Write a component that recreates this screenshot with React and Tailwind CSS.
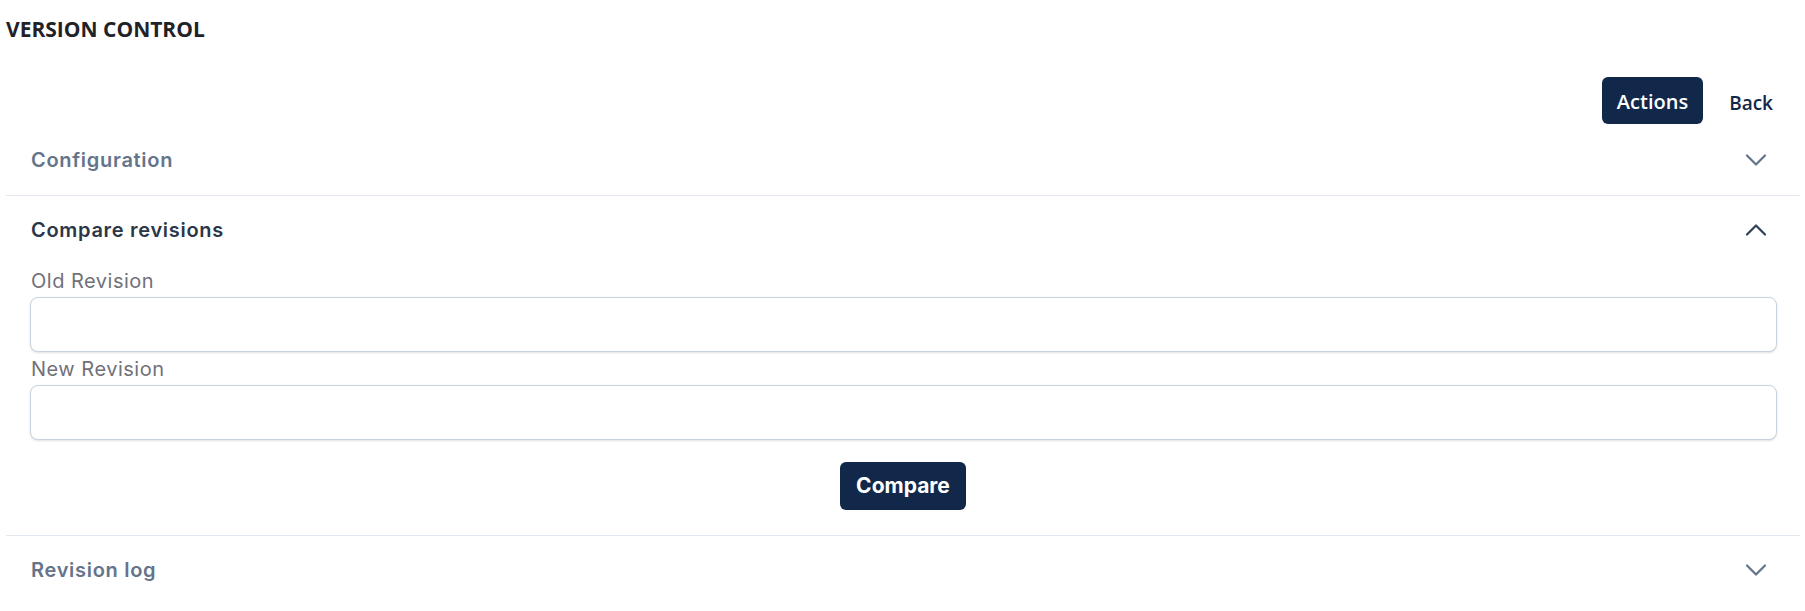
import { ChevronDown, ChevronUp } from 'lucide-react';

function SectionHeader({ title, open }) {
  return (
    <div className="flex items-center justify-between pl-[25px] pr-[26px] h-[68px]">
      <span
        className={`text-[20px] font-semibold tracking-[0.7px] ${open ? 'text-[#2b3648]' : 'text-[#64748b]'}`}
      >
        {title}
      </span>
      {open ? (
        <ChevronUp className="w-9 h-9 text-[#334155]" strokeWidth={1.5} />
      ) : (
        <ChevronDown className="w-9 h-9 text-[#64748b]" strokeWidth={1.5} />
      )}
    </div>
  );
}

function Field({ label }) {
  return (
    <div className="flex flex-col">
      <label className="text-[20px] text-[#71717a] leading-[28px] tracking-[0.5px] pl-[1px] mb-[2px]">
        {label}
      </label>
      <input
        type="text"
        className="h-[55px] w-full rounded-lg border border-[#c8d2e2] bg-white shadow-sm outline-none"
      />
    </div>
  );
}

export default function App() {
  return (
    <div className="min-h-screen bg-white font-['Inter',sans-serif] pl-[6px] pr-[5px]">
      <h1 className="pt-[14px] h-[60px] text-[21px] font-bold text-[#1f2328] font-['Open_Sans',sans-serif]">
        VERSION CONTROL
      </h1>

      <div className="flex justify-end items-center gap-[26px] pt-[17px] pr-[27px]">
        <button className="h-[47px] px-[15px] pt-[3px] rounded-md bg-[#12284a] text-white text-[20px] font-semibold font-['Open_Sans',sans-serif]">
          Actions
        </button>
        <button className="pt-[5px] text-[19px] font-semibold text-[#12284a] font-['Open_Sans',sans-serif]">
          Back
        </button>
      </div>

      <div className="border-b border-[#e2e8f0] h-[72px] flex items-center">
        <div className="w-full">
          <SectionHeader title="Configuration" />
        </div>
      </div>

      <div className="border-b border-[#e2e8f0]">
        <SectionHeader title="Compare revisions" open />
        <div className="pt-[3px] pl-[24px] pr-[23px] flex flex-col gap-[3px]">
          <Field label="Old Revision" />
          <Field label="New Revision" />
        </div>
        <div className="flex justify-center pt-[22px] pb-[25px]">
          <button className="h-[48px] px-[16px] rounded-md bg-[#12284a] text-white text-[21px] font-bold">
            Compare
          </button>
        </div>
      </div>

      <SectionHeader title="Revision log" />
    </div>
  );
}
